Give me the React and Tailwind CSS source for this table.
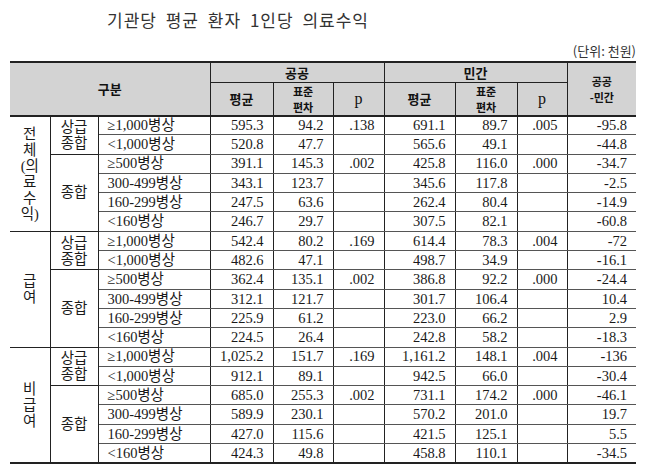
const groups = [
  {
    name: ["전", "체", "(의", "료", "수", "익)"],
    rows: [
      ["≥1,000병상", "595.3", "94.2", ".138", "691.1", "89.7", ".005", "-95.8"],
      ["<1,000병상", "520.8", "47.7", "", "565.6", "49.1", "", "-44.8"],
      ["≥500병상", "391.1", "145.3", ".002", "425.8", "116.0", ".000", "-34.7"],
      ["300-499병상", "343.1", "123.7", "", "345.6", "117.8", "", "-2.5"],
      ["160-299병상", "247.5", "63.6", "", "262.4", "80.4", "", "-14.9"],
      ["<160병상", "246.7", "29.7", "", "307.5", "82.1", "", "-60.8"],
    ],
  },
  {
    name: ["급", "여"],
    rows: [
      ["≥1,000병상", "542.4", "80.2", ".169", "614.4", "78.3", ".004", "-72"],
      ["<1,000병상", "482.6", "47.1", "", "498.7", "34.9", "", "-16.1"],
      ["≥500병상", "362.4", "135.1", ".002", "386.8", "92.2", ".000", "-24.4"],
      ["300-499병상", "312.1", "121.7", "", "301.7", "106.4", "", "10.4"],
      ["160-299병상", "225.9", "61.2", "", "223.0", "66.2", "", "2.9"],
      ["<160병상", "224.5", "26.4", "", "242.8", "58.2", "", "-18.3"],
    ],
  },
  {
    name: ["비", "급", "여"],
    rows: [
      ["≥1,000병상", "1,025.2", "151.7", ".169", "1,161.2", "148.1", ".004", "-136"],
      ["<1,000병상", "912.1", "89.1", "", "942.5", "66.0", "", "-30.4"],
      ["≥500병상", "685.0", "255.3", ".002", "731.1", "174.2", ".000", "-46.1"],
      ["300-499병상", "589.9", "230.1", "", "570.2", "201.0", "", "19.7"],
      ["160-299병상", "427.0", "115.6", "", "421.5", "125.1", "", "5.5"],
      ["<160병상", "424.3", "49.8", "", "458.8", "110.1", "", "-34.5"],
    ],
  },
];

const cell = "border-r border-b border-r-[#222] border-b-[#555] px-[9px] align-middle";
const th = "border-r border-b border-[#222] bg-[#d3d3d3] text-center align-middle font-bold";
// two-line header labels (표준/편차, 공공/-민간)
const th2 = " border-b-2 text-[11px] leading-[16px]";

export default function App() {
  return (
    <div className="w-[650px] h-[474px] bg-white pl-[10px] text-[#1a1a1a]">
      {/* title */}
      <div className="h-[40px] pt-[8px] pl-[97px] text-[17px] leading-[24px] tracking-[1px] [word-spacing:4px] text-[#333] font-['Noto_Sans_CJK_KR',sans-serif]">
        기관당 평균 환자 1인당 의료수익
      </div>
      <div className="w-[626px] h-[21px] text-right text-[13px] leading-[21px] text-[#333] font-['Noto_Sans_CJK_KR',sans-serif]">
        (단위: 천원)
      </div>

      <table className="w-[626px] table-fixed border-collapse border-t-2 border-b-2 border-[#222] text-[14.5px] leading-none font-['Liberation_Serif','Noto_Sans_CJK_KR',serif]">
        <colgroup>
          <col className="w-[40px]" />
          <col className="w-[48px]" />
          <col className="w-[112px]" />
          <col className="w-[63px]" />
          <col className="w-[60px]" />
          <col className="w-[51px]" />
          <col className="w-[71px]" />
          <col className="w-[62px]" />
          <col className="w-[50px]" />
          <col className="w-[69px]" />
        </colgroup>
        <thead className="font-['Noto_Sans_CJK_KR',sans-serif] text-[13px] text-[#111]">
          <tr className="h-[20px]">
            <th colSpan={3} rowSpan={2} className={th + " border-b-2"}>구분</th>
            <th colSpan={3} className={th}>공공</th>
            <th colSpan={3} className={th}>민간</th>
            <th rowSpan={2} className={th + th2 + " border-r-0"}>공공<br />-민간</th>
          </tr>
          <tr className="h-[32px]">
            <th className={th + " border-b-2"}>평균</th>
            <th className={th + th2}>표준<br />편차</th>
            <th className={th + " border-b-2 font-['Liberation_Serif',serif] text-[16px] font-normal"}>p</th>
            <th className={th + " border-b-2"}>평균</th>
            <th className={th + th2}>표준<br />편차</th>
            <th className={th + " border-b-2 font-['Liberation_Serif',serif] text-[16px] font-normal"}>p</th>
          </tr>
        </thead>
        <tbody>
          {groups.map((g) =>
            g.rows.map((r, i) => (
              <tr key={g.name.join("") + i} className="h-[19.3px]">
                {i === 0 && (
                  <td rowSpan={6} className="border-r border-b border-[#222] text-center align-middle leading-[16px]">
                    {g.name.map((c) => (
                      <div key={c}>{c}</div>
                    ))}
                  </td>
                )}
                {i === 0 && (
                  <td rowSpan={2} className="border-r border-b border-[#222] text-center align-middle leading-[16px]">
                    상급<br />종합
                  </td>
                )}
                {i === 2 && (
                  <td rowSpan={4} className="border-r border-b border-[#222] text-center align-middle">
                    종합
                  </td>
                )}
                <td className={cell + " text-left" + (i === 5 ? " border-b-[#222]" : "")}>{r[0]}</td>
                {r.slice(1).map((v, j) => (
                  <td
                    key={j}
                    className={cell + " text-right" + (j === 6 ? " border-r-0" : "") + (i === 5 ? " border-b-[#222]" : "")}
                  >
                    {v}
                  </td>
                ))}
              </tr>
            ))
          )}
        </tbody>
      </table>
    </div>
  );
}
